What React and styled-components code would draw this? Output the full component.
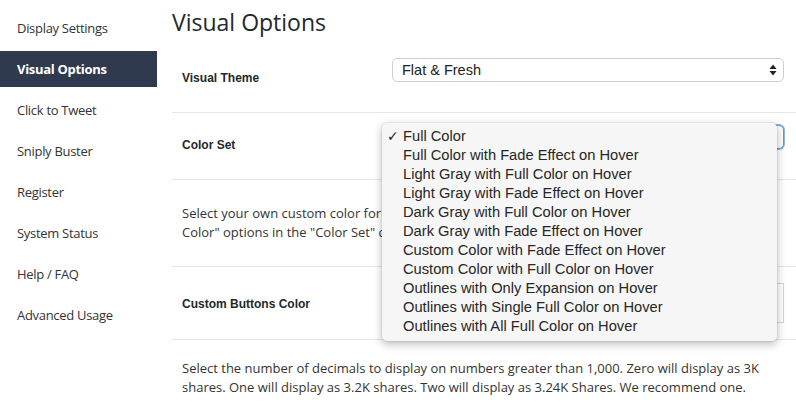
import React from "react";
import styled, { createGlobalStyle } from "styled-components";

const GlobalStyle = createGlobalStyle`
  html, body {
    margin: 0;
    padding: 0;
    background: #fff;
  }
  body {
    font-family: "Open Sans", "Noto Sans", sans-serif;
    color: #333;
  }
`;

const Page = styled.div`
  display: flex;
  width: 796px;
  height: 413px;
  overflow: hidden;
`;

const Sidebar = styled.nav`
  width: 157px;
  flex-shrink: 0;
  padding-top: 10px;
  display: flex;
  flex-direction: column;
  gap: 5px;
`;

const NavItem = styled.div`
  height: 36px;
  display: flex;
  align-items: center;
  padding-left: 17px;
  font-size: 13px;
  letter-spacing: -0.3px;
  color: ${(p) => (p.active ? "#fff" : "#333")};
  font-weight: ${(p) => (p.active ? 700 : 400)};
  background: ${(p) => (p.active ? "#2f3a4e" : "transparent")};
`;

const Main = styled.main`
  flex: 1;
  padding-left: 15px;
  position: relative;
`;

const Title = styled.h1`
  margin: 0;
  height: 46px;
  font-size: 23px;
  font-weight: 400;
  line-height: 44px;
  color: #23282d;
`;

const Row = styled.div`
  display: grid;
  grid-template-columns: 220px 1fr;
  align-items: center;
  min-height: ${(p) => p.h}px;
  border-bottom: 1px solid #e6e6e6;
  box-sizing: border-box;
`;

const Label = styled.div`
  padding-left: 10px;
  padding-top: ${(p) => p.drop || 0}px;
  padding-bottom: ${(p) => p.lift || 0}px;
  font-family: "Liberation Sans", Arial, sans-serif;
  font-size: 12px;
  font-weight: 700;
  color: #23282d;
`;

const Control = styled.div`
  align-self: ${(p) => (p.top ? "start" : "center")};
  padding-top: ${(p) => p.top || 0}px;
  padding-right: 12px;
`;

const SelectBox = styled.div`
  height: 24px;
  box-sizing: border-box;
  border: 1px solid ${(p) => (p.focused ? "#5b9dd9" : "#cfcfcf")};
  box-shadow: ${(p) => (p.focused ? "0 0 0 1px #8cb8e8" : "none")};
  border-radius: 5px;
  background: #fff;
  display: flex;
  align-items: center;
  justify-content: space-between;
  padding: 0 6px 0 9px;
  font-family: "Liberation Sans", Arial, sans-serif;
  font-size: 14.5px;
  color: #222;
`;

const ColorInput = styled.div`
  height: 40px;
  box-sizing: border-box;
  border: 1px solid #d4d4d4;
  background: #fff;
`;

const ParaRow = styled.div`
  border-bottom: ${(p) => (p.line ? "1px solid #e6e6e6" : "none")};
`;

const Paragraph = styled.p`
  margin: 0;
  padding: ${(p) => p.pad};
  padding-left: 10px;
  max-width: 602px;
  font-size: 13px;
  line-height: 18.5px;
  color: #333;
`;

const Menu = styled.ul`
  position: absolute;
  left: 225px;
  top: 123px;
  width: 395px;
  margin: 0;
  padding: 4px 0 5px;
  list-style: none;
  box-sizing: border-box;
  background: #f6f6f6;
  border-radius: 5px;
  box-shadow: 0 3px 10px rgba(0, 0, 0, 0.28), 0 0 0 1px rgba(0, 0, 0, 0.06);
  font-family: "Liberation Sans", Arial, sans-serif;
  font-size: 14.7px;
  color: #262626;
`;

const MenuItem = styled.li`
  position: relative;
  height: 19px;
  line-height: 19px;
  padding-left: 21px;
  white-space: nowrap;
`;

const Check = styled.span`
  position: absolute;
  left: 5px;
  top: 0;
  font-family: "DejaVu Sans", sans-serif;
  font-size: 14px;
  font-weight: 700;
`;

const Arrows = () => (
  <svg width="8" height="12" viewBox="0 0 8 12">
    <path d="M4 0.5 L7.5 5 L0.5 5 Z" fill="#222" />
    <path d="M4 11.5 L7.5 7 L0.5 7 Z" fill="#222" />
  </svg>
);

const navItems = [
  "Display Settings",
  "Visual Options",
  "Click to Tweet",
  "Sniply Buster",
  "Register",
  "System Status",
  "Help / FAQ",
  "Advanced Usage",
];

const colorSets = [
  "Full Color",
  "Full Color with Fade Effect on Hover",
  "Light Gray with Full Color on Hover",
  "Light Gray with Fade Effect on Hover",
  "Dark Gray with Full Color on Hover",
  "Dark Gray with Fade Effect on Hover",
  "Custom Color with Fade Effect on Hover",
  "Custom Color with Full Color on Hover",
  "Outlines with Only Expansion on Hover",
  "Outlines with Single Full Color on Hover",
  "Outlines with All Full Color on Hover",
];

const App = () => (
  <>
    <GlobalStyle />
    <Page>
      <Sidebar>
        {navItems.map((item) => (
          <NavItem key={item} active={item === "Visual Options"}>
            {item}
          </NavItem>
        ))}
      </Sidebar>
      <Main>
        <Title>Visual Options</Title>
        <Row h={67}>
          <Label lift={2}>Visual Theme</Label>
          <Control top={12}>
            <SelectBox>
              <span>Flat &amp; Fresh</span>
              <Arrows />
            </SelectBox>
          </Control>
        </Row>
        <Row h={67}>
          <Label lift={2}>Color Set</Label>
          <Control top={12}>
            <SelectBox focused>
              <span>Full Color</span>
              <Arrows />
            </SelectBox>
          </Control>
        </Row>
        <ParaRow line>
          <Paragraph pad="24px 0 25px">
            Select your own custom color for the share buttons. This color
            will only be used with the "Custom Color" options in the "Color
            Set" drop down menu above.
          </Paragraph>
        </ParaRow>
        <Row h={73}>
          <Label drop={2}>Custom Buttons Color</Label>
          <Control>
            <ColorInput />
          </Control>
        </Row>
        <ParaRow>
          <Paragraph pad="19px 0 0">
            Select the number of decimals to display on numbers greater than
            1,000. Zero will display as 3K shares. One will display as 3.2K
            shares. Two will display as 3.24K Shares. We recommend one.
          </Paragraph>
        </ParaRow>
        <Menu>
          {colorSets.map((c, i) => (
            <MenuItem key={c}>
              {i === 0 && <Check>✓</Check>}
              {c}
            </MenuItem>
          ))}
        </Menu>
      </Main>
    </Page>
  </>
);

export default App;
